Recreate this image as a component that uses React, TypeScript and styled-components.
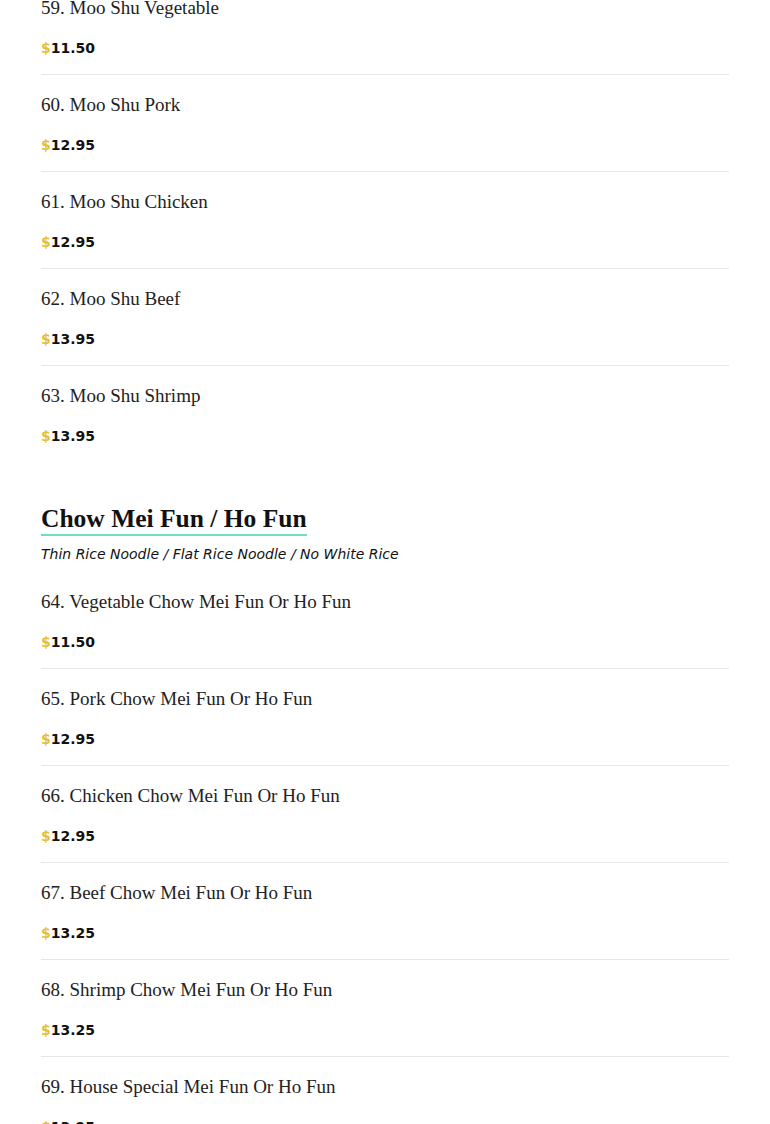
import React from 'react';
import styled, { createGlobalStyle } from 'styled-components';

type MenuItem = {
  no: number;
  name: string;
  price: string;
};

type MenuSection = {
  title?: string;
  note?: string;
  items: MenuItem[];
};

const SECTIONS: MenuSection[] = [
  {
    items: [
      { no: 59, name: 'Moo Shu Vegetable', price: '11.50' },
      { no: 60, name: 'Moo Shu Pork', price: '12.95' },
      { no: 61, name: 'Moo Shu Chicken', price: '12.95' },
      { no: 62, name: 'Moo Shu Beef', price: '13.95' },
      { no: 63, name: 'Moo Shu Shrimp', price: '13.95' },
    ],
  },
  {
    title: 'Chow Mei Fun / Ho Fun',
    note: 'Thin Rice Noodle / Flat Rice Noodle / No White Rice',
    items: [
      { no: 64, name: 'Vegetable Chow Mei Fun Or Ho Fun', price: '11.50' },
      { no: 65, name: 'Pork Chow Mei Fun Or Ho Fun', price: '12.95' },
      { no: 66, name: 'Chicken Chow Mei Fun Or Ho Fun', price: '12.95' },
      { no: 67, name: 'Beef Chow Mei Fun Or Ho Fun', price: '13.25' },
      { no: 68, name: 'Shrimp Chow Mei Fun Or Ho Fun', price: '13.25' },
      { no: 69, name: 'House Special Mei Fun Or Ho Fun', price: '13.95' },
    ],
  },
];

const App: React.FC = () => {
  return (
    <>
      <GlobalStyle />
      <Page>
        {SECTIONS.map((section, sIdx) => (
          <Section key={sIdx}>
            {section.title && (
              <SectionHead>
                <SectionTitle>{section.title}</SectionTitle>
                {section.note && <SectionNote>{section.note}</SectionNote>}
              </SectionHead>
            )}
            <ItemList>
              {section.items.map((item) => (
                <Item key={item.no}>
                  <ItemName>
                    {item.no}. {item.name}
                  </ItemName>
                  <Price>
                    <Dollar>$</Dollar>
                    {item.price}
                  </Price>
                </Item>
              ))}
            </ItemList>
          </Section>
        ))}
      </Page>
    </>
  );
};

export default App;

const GlobalStyle = createGlobalStyle`
  html, body {
    margin: 0;
    padding: 0;
    background: #ffffff;
  }
  body {
    font-family: 'DejaVu Sans', sans-serif;
    overflow: hidden;
  }
`;

const Page = styled.main`
  padding: 0 41px;
  margin-top: -22px;
  display: flex;
  flex-direction: column;
  gap: 42px;
`;

const Section = styled.section`
  display: flex;
  flex-direction: column;
`;

const SectionHead = styled.header`
  display: flex;
  flex-direction: column;
  align-items: flex-start;
  gap: 8px;
  margin-bottom: 8px;
`;

const SectionTitle = styled.h2`
  margin: 0;
  font-family: 'Liberation Serif', serif;
  font-weight: 700;
  font-size: 25.5px;
  line-height: 30px;
  color: #111111;
  border-bottom: 2px solid #6fdfc2;
`;

const SectionNote = styled.p`
  margin: 0;
  font-family: 'DejaVu Sans', sans-serif;
  font-style: italic;
  font-size: 14px;
  line-height: 20px;
  color: #111111;
`;

const ItemList = styled.ul`
  list-style: none;
  margin: 0;
  padding: 0;
`;

const Item = styled.li`
  display: flex;
  flex-direction: column;
  gap: 18px;
  padding: 18px 0 16px;
  border-bottom: 1px solid #e6e6e6;

  &:last-child {
    border-bottom: none;
  }
`;

const ItemName = styled.h3`
  margin: 0;
  font-family: 'Liberation Serif', serif;
  font-weight: 400;
  font-size: 19px;
  line-height: 24px;
  color: #222222;
`;

const Price = styled.div`
  font-family: 'DejaVu Sans', sans-serif;
  font-weight: 700;
  font-size: 14px;
  line-height: 20px;
  color: #111111;
`;

const Dollar = styled.span`
  color: #e6bf2e;
`;
